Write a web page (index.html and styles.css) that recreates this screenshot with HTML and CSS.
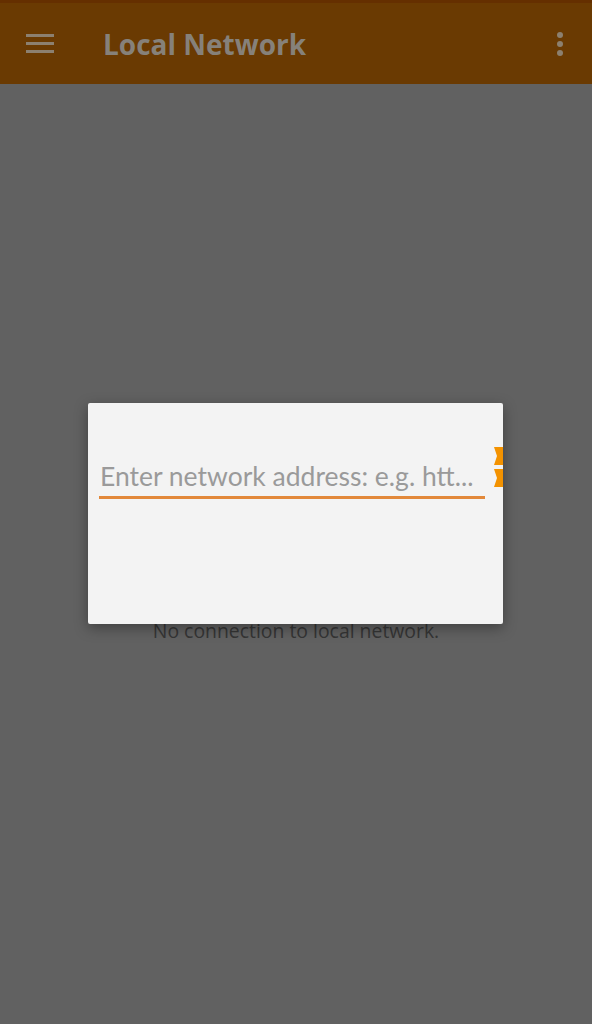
FILE: index.html
```html
<!DOCTYPE html>
<html>
<head>
<meta charset="utf-8">
<link rel="stylesheet" href="styles.css">
</head>
<body>
<div class="screen">
  <header class="appbar">
    <svg class="menu" width="28" height="20" viewBox="0 0 28 20"><rect x="0" y="0" width="28" height="3" fill="#8c8070"/><rect x="0" y="8" width="28" height="3" fill="#8c8070"/><rect x="0" y="16" width="28" height="3" fill="#8c8070"/></svg>
    <h1 class="title">Local Network</h1>
    <svg class="more" width="8" height="26" viewBox="0 0 8 26"><circle cx="4" cy="4" r="3" fill="#8c8070"/><circle cx="4" cy="13" r="3" fill="#8c8070"/><circle cx="4" cy="22" r="3" fill="#8c8070"/></svg>
  </header>
  <main class="content">
    <p class="empty">No connection to local network.</p>
    <div class="dialog">
      <div class="field">
        <span class="placeholder">Enter network address: e.g. htt...</span>
      </div>
      <svg class="peek" width="9" height="40" viewBox="0 0 9 40"><path d="M0 0 L9 0 L9 18 L0 18 L3 9 Z" fill="#f39200"/><path d="M0 22 L9 22 L9 40 L0 40 L3 31 Z" fill="#f39200"/></svg>
    </div>
  </main>
</div>
</body>
</html>
```
FILE: styles.css
```css
html, body { margin: 0; padding: 0; }
body { width: 592px; height: 1024px; overflow: hidden; background: #616161; font-family: "Open Sans", "Noto Sans", sans-serif; }
.screen { display: flex; flex-direction: column; height: 1024px; }
.appbar { height: 84px; box-sizing: border-box; background: #6a3a02; border-top: 3px solid #652f00; display: flex; align-items: center; padding: 0 26px 0 26px; }
.title { margin: 0 0 0 49px; font-size: 28px; font-weight: 700; color: #86817a; flex: 1; letter-spacing: 0; }
.more { margin-right: 2px; }
.content { flex: 1; position: relative; background: #616161; }
.empty { position: absolute; top: 533px; left: 0; right: 0; margin: 0; text-align: center; font-size: 19.4px; color: #353535; }
.dialog { position: absolute; top: 319px; left: 88px; width: 415px; height: 221px; background: #f3f3f3; border-radius: 2px; box-shadow: 0 4px 14px rgba(0,0,0,0.35); box-sizing: border-box; padding: 56px 18px 0 11px; }
.field { border-bottom: 3px solid #e2883a; height: 40px; box-sizing: border-box; padding-left: 1px; }
.placeholder { font-family: "Lato", sans-serif; font-size: 26.5px; color: #9a9a9a; line-height: 34px; white-space: nowrap; }
.peek { position: absolute; right: 0; top: 44px; }
```
